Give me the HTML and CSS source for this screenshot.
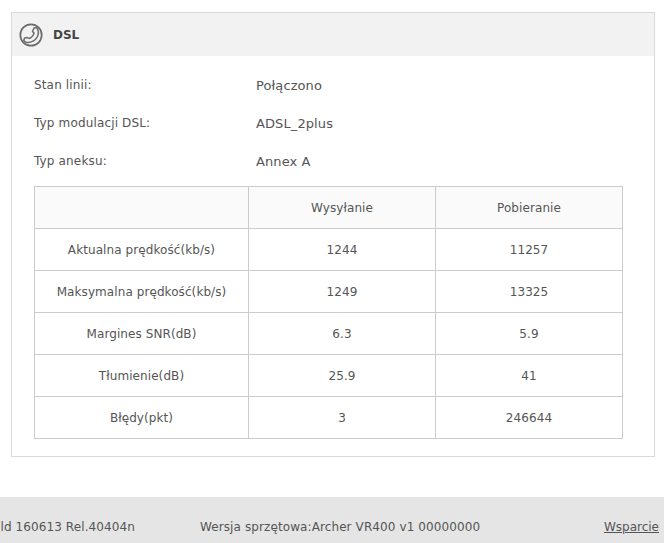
FILE: index.html
```html
<!DOCTYPE html>
<html lang="pl">

<head>
    <meta charset="UTF-8">
    <title>DSL</title>
    <link rel="stylesheet" href="styles.css">
</head>

<body>

    <div class="panel">
        <div class="panel-head">
            <svg class="phone-icon" width="24" height="24" viewBox="0 0 24 24" fill="none" stroke="#6b6b6b">
                <circle cx="12" cy="12" r="10.700" stroke-width="1.700" />
                <path d="M15 5L17.500 4.500C19.500 7 20 10 18.500 13.500C16.500 17.500 12 20 8 19.500C6.500 19.300 5.500 18.500 4.800 17.500L5.500 15L8.500 14.500L10 15.500C12 15 14.500 12.500 15 10L13.500 8.500Z" stroke-width="1.500" stroke-linejoin="round" />
            </svg>
            <b>DSL</b>
        </div>
        <div class="panel-body">
            <div class="row"><label>Stan linii:</label><span>Połączono</span></div>
            <div class="row"><label>Typ modulacji DSL:</label><span>ADSL_2plus</span></div>
            <div class="row"><label>Typ aneksu:</label><span>Annex A</span></div>
            <table class="stats">
                <tr class="top">
                    <td></td>
                    <td>Wysyłanie</td>
                    <td>Pobieranie</td>
                </tr>
                <tr>
                    <td>Aktualna prędkość(kb/s)</td>
                    <td>1244</td>
                    <td>11257</td>
                </tr>
                <tr>
                    <td>Maksymalna prędkość(kb/s)</td>
                    <td>1249</td>
                    <td>13325</td>
                </tr>
                <tr>
                    <td>Margines SNR(dB)</td>
                    <td>6.3</td>
                    <td>5.9</td>
                </tr>
                <tr>
                    <td>Tłumienie(dB)</td>
                    <td>25.9</td>
                    <td>41</td>
                </tr>
                <tr>
                    <td>Błędy(pkt)</td>
                    <td>3</td>
                    <td>246644</td>
                </tr>
            </table>
        </div>
    </div>

    <div class="footer">
        <span class="firmware">Build 160613 Rel.40404n</span>
        <span class="hardware">Wersja sprzętowa:Archer VR400 v1 00000000</span>
        <a href="#" class="support">Wsparcie</a>
    </div>

</body>

</html>
```

FILE: styles.css
```css
html,
body {
    height: 100%;
}

body {
    margin: 0;
    background-color: #fff;
    font-family: "DejaVu Sans", Verdana, sans-serif;
    font-size: 12px;
    color: #555;
    overflow: hidden;
    display: flex;
    flex-direction: column;
}

.panel {
    margin: 12px 9px 0 11px;
    border: 1px solid #d9d9d9;
    height: 443px;
}

.panel-head {
    display: flex;
    align-items: center;
    gap: 10px;
    height: 43px;
    padding-left: 7px;
    background-color: #f2f2f2;
}

.panel-head b {
    color: #444;
}

.panel-body {
    padding: 11px 0 0 22px;
}

.row {
    display: flex;
    height: 38px;
    line-height: 38px;
}

.row label {
    width: 222px;
    margin-top: -1px;
    letter-spacing: 0.15px;
}

.row span {
    font-size: 13px;
    letter-spacing: 0.1px;
}

.stats {
    width: 589px;
    height: 253px;
    margin-top: 5px;
    border-collapse: collapse;
    table-layout: fixed;
    text-align: center;
    letter-spacing: 0.08px;
}

.stats td {
    border: 1px solid #ccc;
    padding: 0;
    height: 41px;
}

.stats td:nth-child(1) {
    width: 213px;
}

.stats td:nth-child(2) {
    width: 186px;
}

.top td {
    background-color: #fafafa;
}

.footer {
    margin-top: auto;
    height: 46px;
    padding-top: 14px;
    box-sizing: border-box;
    background-color: #e5e5e5;
    display: flex;
    align-items: center;
    white-space: nowrap;
    overflow: hidden;
    letter-spacing: 0.1px;
}

.firmware {
    margin-left: -19px;
}

.hardware {
    margin-left: 65px;
}

.support {
    margin-left: auto;
    margin-right: 5px;
    color: #555;
    letter-spacing: 0;
}
```
